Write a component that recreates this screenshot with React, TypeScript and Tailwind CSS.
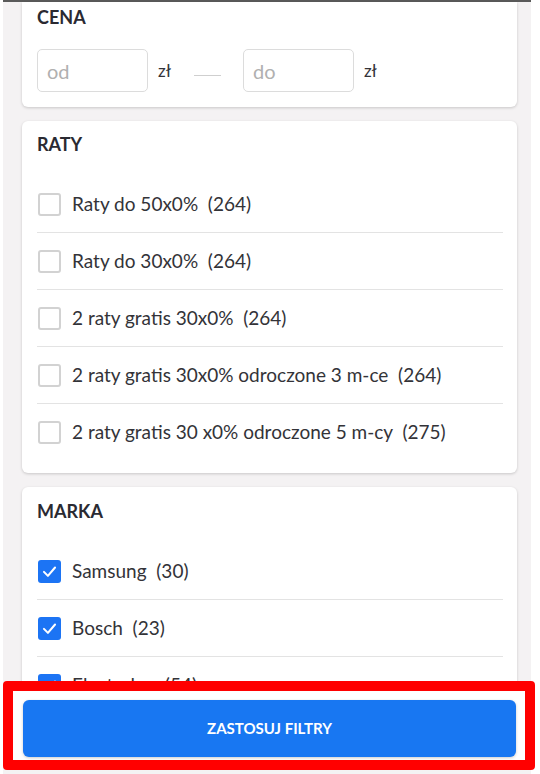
import React from "react"

const raty = [
  { label: "Raty do 50x0%", count: 264 },
  { label: "Raty do 30x0%", count: 264 },
  { label: "2 raty gratis 30x0%", count: 264 },
  { label: "2 raty gratis 30x0% odroczone 3 m-ce", count: 264 },
  { label: "2 raty gratis 30 x0% odroczone 5 m-cy", count: 275 },
]

const marki = [
  { label: "Samsung", count: 30 },
  { label: "Bosch", count: 23 },
  { label: "Electrolux", count: 54 },
]

function Checkbox({ checked }: { checked: boolean }) {
  if (checked) {
    return (
      <span className="flex size-[23px] shrink-0 items-center justify-center rounded-[3px] bg-[#1c74f4]">
        <svg viewBox="0 0 24 24" className="size-[19px]" fill="none" stroke="#fff" strokeWidth="2.6" strokeLinecap="round" strokeLinejoin="round">
          <polyline points="5,12.5 10,17.5 19,7" />
        </svg>
      </span>
    )
  }
  return <span className="size-[23px] shrink-0 rounded-[3px] border-2 border-[#d2d2d2] bg-white" />
}

function FilterRow({ label, count, checked, last }: { label: string; count: number; checked: boolean; last: boolean }) {
  return (
    <div className={`flex h-[57px] items-center gap-[11px] pl-px ${last ? "" : "border-b border-[#e3e3e3]"}`}>
      <Checkbox checked={checked} />
      <span className="text-[19px] text-[#333338]">
        {label}&nbsp; ({count})
      </span>
    </div>
  )
}

function Card({ title, children, className = "" }: { title: string; children: React.ReactNode; className?: string }) {
  return (
    <div className={`rounded-[6px] bg-white pr-[14px] pl-[15px] shadow-[0_1px_3px_rgba(0,0,0,0.18)] ${className}`}>
      <div className="text-[18px] leading-[22px] font-bold text-[#2a2a32]">{title}</div>
      {children}
    </div>
  )
}

export default function App() {
  return (
    <div className="relative h-[774px] w-[540px] overflow-hidden bg-white font-['Lato','Noto_Sans',sans-serif]">
      <div className="ml-[3px] flex h-full w-[528px] flex-col gap-[14px] border-t-2 border-[#5a5a5a] bg-[#f4f2f3] pr-[14px] pl-[19px]">
        <Card title="CENA" className="rounded-t-none pt-[4px] pb-[15px]">
          <div className="mt-[21px] flex items-center">
            <div className="flex h-[43px] w-[111px] items-center rounded-[5px] border border-[#dcdcdc] pl-[9px] text-[20px] text-[#b0b0b0]">
              od
            </div>
            <span className="ml-[10px] text-[17px] text-[#333338]">zł</span>
            <span className="mt-[10px] ml-[23px] h-px w-[27px] bg-[#cfcfcf]" />
            <div className="ml-[22px] flex h-[43px] w-[111px] items-center rounded-[5px] border border-[#dcdcdc] pl-[9px] text-[20px] text-[#b0b0b0]">
              do
            </div>
            <span className="ml-[10px] text-[17px] text-[#333338]">zł</span>
          </div>
        </Card>

        <Card title="RATY" className="pt-[12px] pb-[12px]">
          <div className="mt-[21px] flex flex-col">
            {raty.map((r, i) => (
              <FilterRow key={r.label} label={r.label} count={r.count} checked={false} last={i === raty.length - 1} />
            ))}
          </div>
        </Card>

        <Card title="MARKA" className="pt-[13px] pb-[12px]">
          <div className="mt-[21px] flex flex-col">
            {marki.map((m, i) => (
              <FilterRow key={m.label} label={m.label} count={m.count} checked last={i === marki.length - 1} />
            ))}
          </div>
        </Card>
      </div>

      <div className="absolute top-[681px] left-[3px] h-[89px] w-[532px] rounded-[4px] border-[10px] border-[#ff0000] bg-white pt-[9px] pl-[10px]">
        <button className="flex h-[57px] w-[493px] items-center justify-center rounded-[6px] bg-[#1877f2] text-[15px] font-bold text-white shadow-[0_1px_3px_rgba(0,0,0,0.2)]">
          ZASTOSUJ FILTRY
        </button>
      </div>
    </div>
  )
}
